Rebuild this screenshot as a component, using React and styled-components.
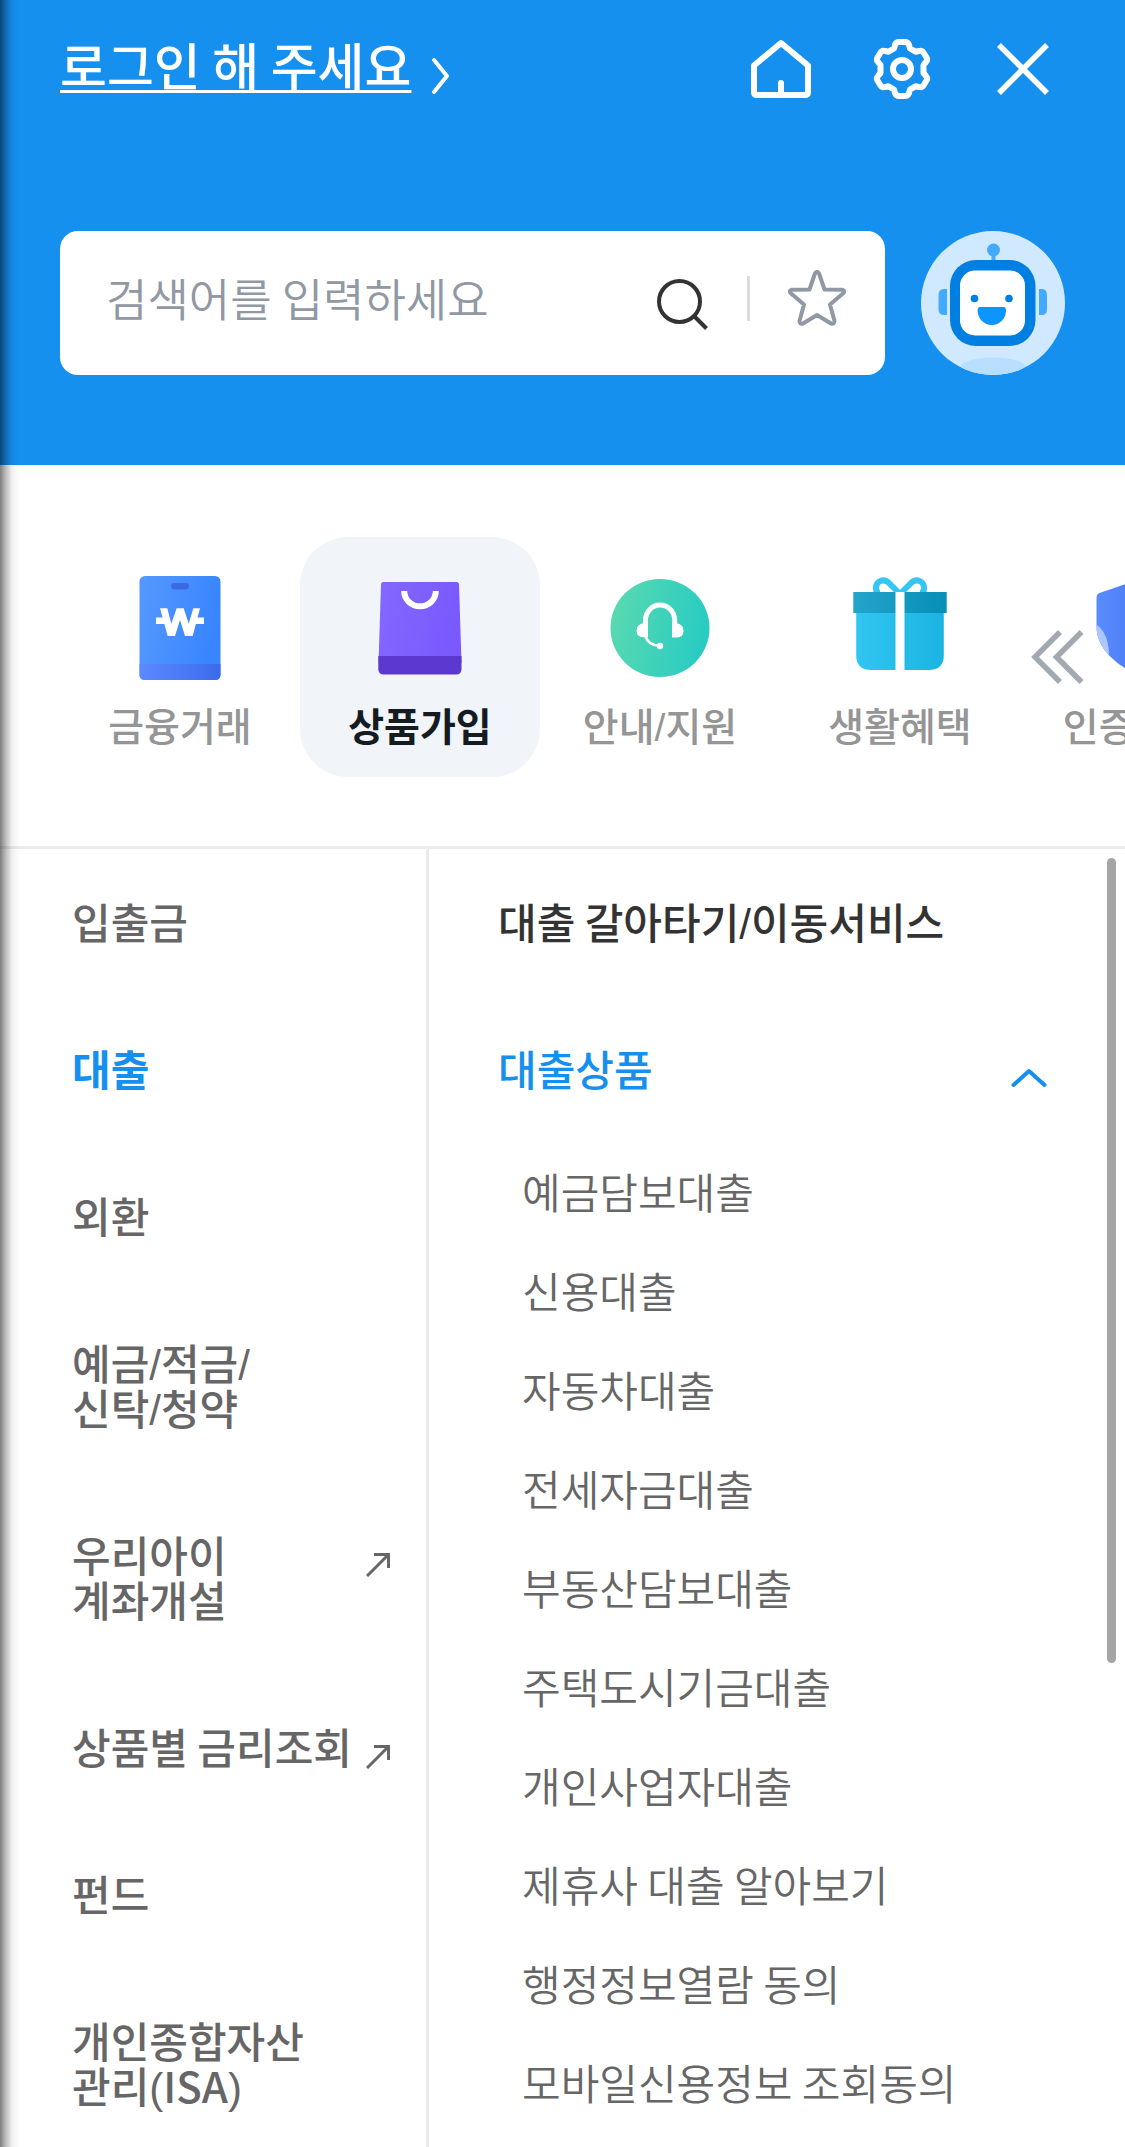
import styled, { createGlobalStyle } from "styled-components";

const tabs = [
    { label: "금융거래", icon: <BankIcon /> },
    { label: "상품가입", icon: <BagIcon />, active: true },
    { label: "안내/지원", icon: <SupportIcon /> },
    { label: "생활혜택", icon: <GiftIcon /> },
    { label: "인증/보안", icon: <ShieldIcon /> },
];

const categories = [
    { lines: ["입출금"] },
    { lines: ["대출"], active: true },
    { lines: ["외환"] },
    { lines: ["예금/적금/", "신탁/청약"] },
    { lines: ["우리아이", "계좌개설"], link: true },
    { lines: ["상품별 금리조회"], link: true },
    { lines: ["펀드"] },
    { lines: ["개인종합자산", "관리(ISA)"] },
];

const loans = [
    "예금담보대출",
    "신용대출",
    "자동차대출",
    "전세자금대출",
    "부동산담보대출",
    "주택도시기금대출",
    "개인사업자대출",
    "제휴사 대출 알아보기",
    "행정정보열람 동의",
    "모바일신용정보 조회동의",
];

// slashes and brackets use the latin font
const withMarks = (text) =>
    text
        .split(/([/()])/)
        .map((part, i) => (i % 2 ? <Mark key={i}>{part}</Mark> : part));

function App() {
    return (
        <Container>
            <GlobalStyle />
            <Header>
                <TopBar>
                    <LoginLink>
                        <span>로그인 해 주세요</span>
                        <svg width="20" height="38" viewBox="0 0 20 38" fill="none">
                            <path
                                d="M3 3 16 19 3 35"
                                stroke="#fff"
                                strokeWidth="4"
                                strokeLinecap="round"
                                strokeLinejoin="round"
                            />
                        </svg>
                    </LoginLink>
                    <TopIcons>
                        <HomeIcon />
                        <GearIcon />
                        <CloseIcon />
                    </TopIcons>
                </TopBar>
                <SearchRow>
                    <SearchBox>
                        <Placeholder>검색어를 입력하세요</Placeholder>
                        <SearchIcon />
                        <SearchDivider />
                        <StarIcon />
                    </SearchBox>
                    <RobotIcon />
                </SearchRow>
            </Header>
            <TabBar>
                {tabs.map((tab) => (
                    <Tab key={tab.label} $active={tab.active}>
                        {tab.icon}
                        <TabLabel $active={tab.active}>{withMarks(tab.label)}</TabLabel>
                    </Tab>
                ))}
                <MoreTabs>
                    <svg width="54" height="56" viewBox="0 0 54 56" fill="none">
                        <path
                            d="M30 3 5 28l25 25M51.500 3 26.500 28l25 25"
                            stroke="#a2a9b1"
                            strokeWidth="5.500"
                        />
                    </svg>
                </MoreTabs>
            </TabBar>
            <Body>
                <SideMenu>
                    {categories.map((item) => (
                        <SideItem key={item.lines[0]} $active={item.active}>
                            <div>
                                {item.lines.map((line) => (
                                    <Line key={line}>{withMarks(line)}</Line>
                                ))}
                            </div>
                            {item.link && <LinkIcon />}
                        </SideItem>
                    ))}
                </SideMenu>
                <Content>
                    <ContentTitle>
                        <span>{withMarks("대출 갈아타기/이동서비스")}</span>
                    </ContentTitle>
                    <ContentTitle $active>
                        <span>대출상품</span>
                        <svg width="36" height="20" viewBox="0 0 36 20" fill="none">
                            <path
                                d="M2.500 17 18 3l15.500 14"
                                stroke="#1590ef"
                                strokeWidth="4"
                                strokeLinecap="round"
                                strokeLinejoin="round"
                            />
                        </svg>
                    </ContentTitle>
                    {loans.map((loan) => (
                        <LoanItem key={loan}>{loan}</LoanItem>
                    ))}
                </Content>
                <ScrollThumb />
            </Body>
            <EdgeShadow />
        </Container>
    );
}

export default App;

function HomeIcon() {
    return (
        <svg width="60" height="60" viewBox="0 0 60 60" fill="none">
            <path
                d="M30 4 57 26.500V53q0 3-3 3H6q-3 0-3-3V26.500ZM30 56V44"
                stroke="#fff"
                strokeWidth="6"
                strokeLinecap="round"
                strokeLinejoin="round"
            />
        </svg>
    );
}

function GearIcon() {
    return (
        <svg width="60" height="60" viewBox="-30 -30 60 60" fill="none">
            <g stroke="#fff" strokeWidth="6" strokeLinejoin="round">
                <circle r="9" />
                <path d="M-3-27H3Q6-27 7-24L8-20.500 13.500-17.300 17-18Q20-19 21.800-16L24.500-11.500Q26-9 24-7L21.500-4V4L24 7Q26 9 24.500 11.500L21.800 16Q20 19 17 18L13.500 17.300 8 20.500 7 24Q6 27 3 27H-3Q-6 27-7 24L-8 20.500-13.500 17.300-17 18Q-20 19-21.800 16L-24.500 11.500Q-26 9-24 7L-21.500 4V-4L-24-7Q-26-9-24.500-11.500L-21.800-16Q-20-19-17-18L-13.500-17.300-8-20.500-7-24Q-6-27-3-27Z" />
            </g>
        </svg>
    );
}

function CloseIcon() {
    return (
        <svg width="52" height="52" viewBox="0 0 52 52" fill="none">
            <path d="M2 2 50 50M50 2 2 50" stroke="#fff" strokeWidth="5.500" />
        </svg>
    );
}

function SearchIcon() {
    return (
        <svg width="52" height="52" viewBox="0 0 52 52" fill="none">
            <g stroke="#333" strokeWidth="4">
                <circle cx="22.500" cy="22.500" r="20.500" />
                <path d="M37 37 49.500 49.500" />
            </g>
        </svg>
    );
}

function StarIcon() {
    return (
        <svg width="58" height="56" viewBox="0 0 58 56" fill="none">
            <path
                d="M27 3.300Q29 .5 31 3.300L36.500 19.500 54 19.700Q57.500 20.500 55.500 23L42 34.500 46.500 51Q46.500 54.500 43 53.500L29 45 15 53.500Q11.500 54.500 11.500 51L16 34.500 2.500 23Q.5 20.500 4 19.700L21.500 19.500Z"
                stroke="#9098a3"
                strokeWidth="4"
                strokeLinejoin="round"
            />
        </svg>
    );
}

function LinkIcon() {
    return (
        <svg width="24" height="24" viewBox="0 0 24 24" fill="none">
            <path d="M1 23 22 2M8 1.500H22.500V15" stroke="#666" strokeWidth="3" />
        </svg>
    );
}

function RobotIcon() {
    return (
        <svg width="144" height="144" viewBox="0 0 144 144">
            <clipPath id="face">
                <circle cx="72" cy="72" r="72" />
            </clipPath>
            <circle cx="72" cy="72" r="72" fill="#d1e9ff" />
            <ellipse cx="72" cy="135.500" rx="32" ry="9" fill="#b8dfff" clipPath="url(#face)" />
            <g fill="#42abff">
                <circle cx="72.500" cy="19" r="6.500" />
                <path d="M70.500 22h4v9h-4zM26 58v26h-3q-5.500 0-5.500-6V64q0-6 5.500-6zM118 58v26h3q5 0 5-6V64q0-6-5-6z" />
            </g>
            <rect x="29" y="29" width="85.500" height="86" rx="26" fill="#007fe2" />
            <rect x="39" y="39.500" width="65" height="65" rx="15" fill="#fff" />
            <circle cx="53.500" cy="67.500" r="3.800" fill="#007fe2" />
            <circle cx="88" cy="67.500" r="3.800" fill="#007fe2" />
            <path d="M59 76h24q2 0 2 3.500a14.200 14.500 0 0 1-28.400 0q0-3.500 2.400-3.500z" fill="#0a95ff" />
        </svg>
    );
}

function BankIcon() {
    return (
        <svg width="120" height="120" viewBox="0 0 120 120">
            <linearGradient id="bank" x1="0" y1="0" x2="1" y2="0.200">
                <stop stopColor="#5599ff" />
                <stop offset="1" stopColor="#3885ff" />
            </linearGradient>
            <linearGradient id="bankBase">
                <stop stopColor="#5d89ff" />
                <stop offset="1" stopColor="#3b6cec" />
            </linearGradient>
            <rect x="19.500" y="9" width="81" height="104" rx="5.500" fill="url(#bank)" />
            <path d="M19.500 97h81v10.500q0 5.500-5.500 5.500H25q-5.500 0-5.500-5.500z" fill="url(#bankBase)" />
            <rect x="51" y="16" width="18" height="6.500" rx="3.200" fill="#3d6ae3" />
            <path
                d="M36 50.500h10v6.400H36zM74 50.500h10v6.400H74zM40 41.300h7.300l4 15.400 5.400-15.400h7l5 15.400 4.600-15.400H80L72.700 69H65l-5-16-5 16h-7.300z"
                fill="#fff"
            />
        </svg>
    );
}

function BagIcon() {
    return (
        <svg width="120" height="120" viewBox="0 0 120 120">
            <linearGradient id="bag" x1="0" y1="0" x2="1" y2="0.200">
                <stop stopColor="#8468ff" />
                <stop offset="1" stopColor="#7a59ff" />
            </linearGradient>
            <path d="M23.500 15h73q2.500 0 2.500 2.500L101.500 96h-83L21 17.500Q21 15 23.500 15z" fill="url(#bag)" />
            <path d="M18.300 89h83.200v13q0 5.500-5.500 5.500H24q-5.700 0-5.700-5.500z" fill="#5c38d1" />
            <path d="M44.200 24a15.800 15.300 0 0 0 31.600 0" stroke="#fff" strokeWidth="6" fill="none" />
        </svg>
    );
}

function SupportIcon() {
    return (
        <svg width="120" height="120" viewBox="0 0 120 120">
            <linearGradient id="support" x1="0" y1="0" x2="1" y2="0.200">
                <stop stopColor="#5cdaae" />
                <stop offset="1" stopColor="#2accc2" />
            </linearGradient>
            <ellipse cx="60" cy="61" rx="49.500" ry="49" fill="url(#support)" />
            <g fill="none" stroke="#fff">
                <path d="M45.500 68V53a14.600 15 0 0 1 29.200 0V68" strokeWidth="5" />
                <path d="M45.500 69q2 9 14.500 10" strokeWidth="2.500" />
            </g>
            <path
                d="M45 56q-8.500.5-8.500 7.500T45 70.500h3V56zM75 56q8.500.5 8.500 7.500T77 70.500h-5V56z"
                fill="#fff"
            />
            <circle cx="60" cy="79" r="3.200" fill="#fff" />
        </svg>
    );
}

function GiftIcon() {
    return (
        <svg width="120" height="120" viewBox="0 0 120 120">
            <linearGradient id="gift">
                <stop stopColor="#31c5f1" />
                <stop offset="1" stopColor="#1bb4e2" />
            </linearGradient>
            <linearGradient id="giftLid">
                <stop stopColor="#24a4cc" />
                <stop offset="1" stopColor="#068fb7" />
            </linearGradient>
            <path
                d="M60 27 49.500 16.500C43 10 35.500 15 36 22q0 4 4 4M60 27 70.500 16.500C77 10 84.500 15 84 22q0 4-4 4"
                fill="none"
                stroke="#34c7f4"
                strokeWidth="6"
            />
            <path d="M16.200 40h87.600v48q0 15-15 15H31.200q-15 0-15-15z" fill="url(#gift)" />
            <path d="M13.300 25h93.400v21H13.300z" fill="url(#giftLid)" />
            <path d="M55.500 25h9v78h-9z" fill="#fff" />
        </svg>
    );
}

function ShieldIcon() {
    return (
        <svg width="120" height="120" viewBox="0 0 120 120">
            <linearGradient id="shield">
                <stop stopColor="#5b90ff" />
                <stop offset="1" stopColor="#3a62ea" />
            </linearGradient>
            <clipPath id="shieldShape">
                <path d="M19.500 26 60 12l41 14q3 1 3 5v28c0 24-22 40-44 50-22-10-43.500-26-43.500-50V31q0-4 3-5z" />
            </clipPath>
            <g clipPath="url(#shieldShape)">
                <path d="M10 5h100v110H10z" fill="url(#shield)" />
                <ellipse cx="10" cy="87" rx="19" ry="31" fill="#adc6ff" />
            </g>
        </svg>
    );
}

const GlobalStyle = createGlobalStyle`
    * {
        box-sizing: border-box;
    }

    body {
        margin: 0;
        background-color: #fff;
        font-family: "Noto Sans CJK KR", "Noto Sans", sans-serif;
    }

    svg {
        display: block;
        flex-shrink: 0;
    }
`;

const Container = styled.div`
    position: relative;
    display: flex;
    flex-direction: column;
    width: 1125px;
    height: 2147px;
    overflow: hidden;
    background-color: #fff;
`;

const Mark = styled.span`
    font-family: "Liberation Sans", sans-serif;
    font-weight: 400;
    line-height: 0;
`;

const Header = styled.header`
    display: flex;
    flex-direction: column;
    height: 465px;
    flex-shrink: 0;
    padding: 0 60px;
    background-color: #1590ef;
`;

const TopBar = styled.div`
    display: flex;
    justify-content: space-between;
    height: 231px;
`;

const LoginLink = styled.div`
    display: flex;
    align-items: flex-start;
    column-gap: 20px;
    padding-top: 27px;
    color: #fff;
    font-size: 51px;
    font-weight: 500;
    line-height: 74px;

    span {
        text-decoration: underline;
        text-decoration-thickness: 3px;
        text-underline-offset: 4px;
        text-decoration-skip-ink: none;
    }

    svg {
        margin-top: 30px;
    }
`;

const TopIcons = styled.div`
    display: flex;
    align-items: center;
    column-gap: 61px;
    height: 138px;
    padding-right: 16px;

    svg:last-child {
        margin-left: 4px;
    }
`;

const SearchRow = styled.div`
    display: flex;
    column-gap: 36px;
`;

const SearchBox = styled.div`
    display: flex;
    align-items: center;
    width: 825px;
    height: 144px;
    padding: 0 39px 0 46px;
    background-color: #fff;
    border-radius: 18px;

    svg:first-of-type {
        margin-top: 3px;
    }

    svg:last-of-type {
        margin-bottom: 11px;
    }
`;

const Placeholder = styled.span`
    flex: 1;
    padding-bottom: 10px;
    color: #9098a3;
    font-size: 45px;
    font-weight: 350;
    line-height: 66px;
`;

const SearchDivider = styled.div`
    width: 3px;
    height: 45px;
    margin: 0 38px 9px 38px;
    background-color: #dcdcdc;
`;

const TabBar = styled.nav`
    position: relative;
    display: flex;
    flex-shrink: 0;
    height: 384px;
    padding: 72px 0 0 60px;
    border-bottom: 3px solid #ebebeb;
`;

const Tab = styled.div`
    display: flex;
    flex-direction: column;
    align-items: center;
    flex-shrink: 0;
    width: 240px;
    height: 240px;
    padding-top: 30px;
    border-radius: 48px;
    background-color: ${({ $active }) => ($active ? "#f1f5fa" : "transparent")};
`;

const TabLabel = styled.span`
    margin-top: 9px;
    color: ${({ $active }) => ($active ? "#151c21" : "#959595")};
    font-size: 39px;
    font-weight: ${({ $active }) => ($active ? 700 : 500)};
    line-height: 57px;
    white-space: nowrap;
`;

const MoreTabs = styled.div`
    position: absolute;
    top: 164px;
    right: 41px;
`;

const Body = styled.div`
    position: relative;
    display: flex;
    flex: 1;
    min-height: 0;
    overflow: hidden;
    font-size: 42px;
    line-height: 45px;
`;

const SideMenu = styled.ul`
    width: 429px;
    flex-shrink: 0;
    margin: 0;
    padding: 0 36px 0 72px;
    border-right: 3px solid #ebebeb;
    list-style: none;
`;

const SideItem = styled.li`
    display: flex;
    justify-content: space-between;
    padding: 49px 0 53px;
    color: ${({ $active }) => ($active ? "#1590ef" : "#666")};
    font-weight: ${({ $active }) => ($active ? 700 : 500)};

    svg {
        margin: 22px 0 -4px;
    }
`;

const Line = styled.span`
    display: block;
    white-space: nowrap;
`;

const Content = styled.section`
    flex: 1;
    padding: 0 78px 0 69px;
`;

const ContentTitle = styled.div`
    display: flex;
    justify-content: space-between;
    height: 147px;
    padding: 49px 0 53px;
    color: ${({ $active }) => ($active ? "#1590ef" : "#333")};
    font-weight: 500;

    svg {
        margin-top: 23px;
    }
`;

const LoanItem = styled.div`
    padding: 25px 0 29px 24px;
    color: #666;
    font-weight: 350;
`;

const ScrollThumb = styled.div`
    position: absolute;
    top: 9px;
    right: 9px;
    width: 9px;
    height: 805px;
    border-radius: 5px;
    background-color: #a5a5a5;
`;

const EdgeShadow = styled.div`
    position: absolute;
    top: 0;
    left: 0;
    width: 20px;
    height: 100%;
    background: linear-gradient(
        to right,
        rgba(0, 0, 0, 0.5),
        rgba(0, 0, 0, 0.25) 30%,
        rgba(0, 0, 0, 0.06) 60%,
        rgba(0, 0, 0, 0)
    );
`;
